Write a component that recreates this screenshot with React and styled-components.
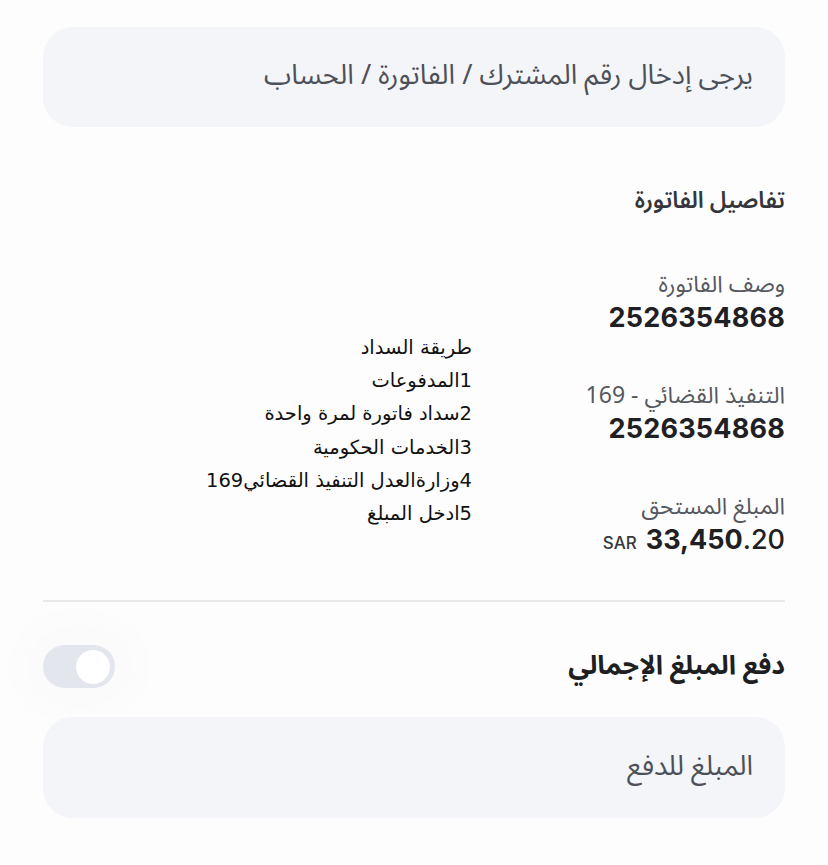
import React from 'react';
import styled, { createGlobalStyle } from 'styled-components';

const GlobalStyle = createGlobalStyle`
  html, body {
    margin: 0;
    padding: 0;
    background: #fdfdfd;
  }
  body {
    font-family: 'Noto Sans Arabic', 'DejaVu Sans', 'Noto Sans', sans-serif;
  }
`;

const details = [
  { label: 'وصف الفاتورة', value: '2526354868' },
  { label: '169 - التنفيذ القضائي', value: '2526354868', ltr: true },
];

const steps = [
  'طريقة السداد',
  '1المدفوعات',
  '2سداد فاتورة لمرة واحدة',
  '3الخدمات الحكومية',
  '4وزارةالعدل التنفيذ القضائي169',
  '5ادخل المبلغ',
];

function App() {
  return (
    <>
      <GlobalStyle />
      <Page dir="rtl">
        <InputBox>
          <Placeholder>يرجى إدخال رقم المشترك / الفاتورة / الحساب</Placeholder>
        </InputBox>

        <SectionTitle>تفاصيل الفاتورة</SectionTitle>

        <DetailsGrid>
          <InfoColumn>
            {details.map((item) => (
              <InfoGroup key={item.label}>
                <InfoLabel>
                  {item.ltr ? <bdi dir="ltr">{item.label}</bdi> : item.label}
                </InfoLabel>
                <InfoValue>{item.value}</InfoValue>
              </InfoGroup>
            ))}
            <InfoGroup>
              <InfoLabel>المبلغ المستحق</InfoLabel>
              <AmountRow>
                <Currency>SAR</Currency>
                <Amount>
                  33,450<Fraction>.20</Fraction>
                </Amount>
              </AmountRow>
            </InfoGroup>
          </InfoColumn>

          <StepsList>
            {steps.map((step) => (
              <StepLine key={step}>{step}</StepLine>
            ))}
          </StepsList>
        </DetailsGrid>

        <Divider />

        <ToggleRow>
          <ToggleLabel>دفع المبلغ الإجمالي</ToggleLabel>
          <ToggleHalo>
            <ToggleTrack>
              <ToggleKnob />
            </ToggleTrack>
          </ToggleHalo>
        </ToggleRow>

        <InputBox $spaced>
          <Placeholder>المبلغ للدفع</Placeholder>
        </InputBox>
      </Page>
    </>
  );
}

export default App;

const Page = styled.div`
  box-sizing: border-box;
  width: 828px;
  min-height: 865px;
  padding: 27px 43px 40px;
  display: flex;
  flex-direction: column;
`;

const InputBox = styled.div`
  height: ${(p) => (p.$spaced ? '101px' : '100px')};
  margin-top: ${(p) => (p.$spaced ? '29px' : '0')};
  border-radius: 30px;
  background: #f4f5f8;
  display: flex;
  align-items: center;
  padding: 0 32px;
`;

const Placeholder = styled.span`
  font-size: 27.5px;
  color: #4d5058;
  line-height: 1;
  margin-top: -2px;
`;

const SectionTitle = styled.h2`
  margin: 59px 0 0;
  font-size: 23px;
  line-height: 30px;
  font-weight: 600;
  color: #34363b;
`;

const DetailsGrid = styled.div`
  display: grid;
  grid-template-columns: 313px 1fr;
  margin-top: 54px;
`;

const InfoColumn = styled.div`
  display: flex;
  flex-direction: column;
  gap: 46px;
`;

const InfoGroup = styled.div`
  display: flex;
  flex-direction: column;
`;

const InfoLabel = styled.div`
  font-size: 23px;
  line-height: 30px;
  color: #55585f;
  font-family: 'Noto Sans Arabic', 'DejaVu Sans', 'Inter', sans-serif;
`;

const InfoValue = styled.div`
  margin-top: 1px;
  font-family: 'Inter', 'Roboto', sans-serif;
  font-size: 27px;
  line-height: 34px;
  font-weight: 700;
  letter-spacing: 0.2px;
  color: #1f2023;
`;

const AmountRow = styled.div`
  margin-top: 1px;
  direction: ltr;
  display: flex;
  justify-content: flex-end;
  align-items: baseline;
  gap: 9px;
  font-family: 'Inter', 'Roboto', sans-serif;
  color: #1f2023;
`;

const Currency = styled.span`
  font-size: 17px;
  font-weight: 500;
  color: #36383d;
`;

const Amount = styled.span`
  font-size: 27px;
  line-height: 34px;
  font-weight: 700;
  letter-spacing: 0;
`;

const Fraction = styled.span`
  font-weight: 500;
`;

const StepsList = styled.div`
  margin-top: 61px;
  display: flex;
  flex-direction: column;
  font-family: 'DejaVu Sans', 'Noto Sans Arabic', sans-serif;
`;

const StepLine = styled.div`
  font-size: 19.5px;
  line-height: 33.2px;
  color: #111;
`;

const Divider = styled.hr`
  margin: 43px 0 0;
  border: none;
  height: 2px;
  background: #e9e9eb;
`;

const ToggleRow = styled.div`
  margin-top: 43px;
  height: 43px;
  display: flex;
  align-items: center;
  justify-content: space-between;
`;

const ToggleLabel = styled.div`
  font-size: 26.5px;
  line-height: 1;
  font-weight: 700;
  color: #1e1f22;
`;

const ToggleHalo = styled.div`
  border-radius: 50%;
  box-shadow: 0 0 40px 30px rgba(0, 0, 0, 0.01);
`;

const ToggleTrack = styled.div`
  width: 72px;
  height: 43px;
  border-radius: 22px;
  background: #e3e6ed;
  display: flex;
  align-items: center;
  justify-content: flex-start;
  padding: 0 5px;
  box-sizing: border-box;
`;

const ToggleKnob = styled.div`
  width: 34px;
  height: 34px;
  border-radius: 50%;
  background: #ffffff;
`;
